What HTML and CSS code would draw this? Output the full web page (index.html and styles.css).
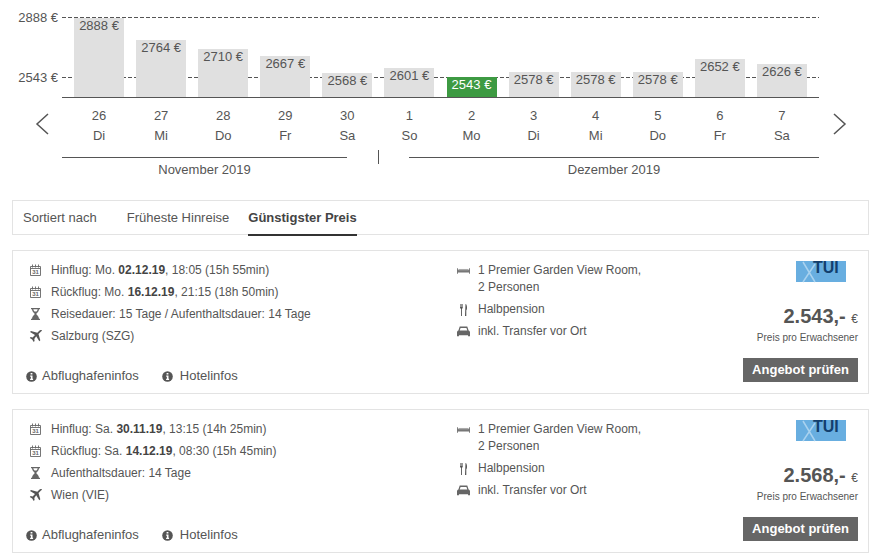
FILE: index.html

```html
<!DOCTYPE html>
<html lang="de">
  <head>
    <meta charset="UTF-8" />
    <title>Angebote</title>
    <link rel="stylesheet" href="styles.css">
  </head>
  <body>
    <svg class="sprite" width="0" height="0">
      <symbol id="i-cal" viewBox="0 0 11 12">
        <path d="M.5 2.500h10v9H.5zM.5 4.500h10M2.500 .5v3M5.500 .5v3M8.500 .5v3" fill="none" stroke="#666" stroke-width=".9" />
      </symbol>
      <symbol id="i-glass" viewBox="0 0 9 12">
        <path d="M0 0h9v1.300H8C8 4 5.600 5 5.200 6c.4 1 2.800 2 2.800 4.700h1V12H0v-1.300h1C1 8 3.400 7 3.800 6 3.400 5 1 4 1 1.300H0zM2.300 1.300c.1 1 .6 1.700 1.200 2.300h2c.6-.6 1.100-1.300 1.200-2.300z" fill="#666" fill-rule="evenodd" />
      </symbol>
      <symbol id="i-plane" viewBox="0 0 13 12">
        <path d="M12.800.2c-.7-.5-1.800-.1-2.500.6L8.300 2.800 2 1 1 2l5 3.100-2.400 2.300-1.900-.3-.9.9 2.400 1.500 1.500 2.400.9-.9-.3-1.900L7.200 6.200 10.300 11.300l1-1-1.800-6.300 2-2c.7-.7 1.900-1.200 1.300-1.800z" fill="#555" />
      </symbol>
      <symbol id="i-info" viewBox="0 0 11 11">
        <circle cx="5.500" cy="5.500" r="5.300" fill="#555" />
        <path d="M4.600 2h1.800v1.600H4.600zM4.200 4.500h2.300v3.300h.6V9H4.100V7.800h.8V5.700h-.7z" fill="#fff" />
      </symbol>
      <symbol id="i-bed" viewBox="0 0 14 6">
        <path d="M0 0h1v2h12V0h1v6h-1V4.500H1V6H0z" fill="#777" />
        <path d="M1.500 .8h11v1.500h-11z" fill="#aaa" />
      </symbol>
      <symbol id="i-food" viewBox="0 0 7 12">
        <path d="M0 0h.6v3h.5V0h.6v3h.5V0h.6v3.600c0 .7-.4 1.100-.9 1.300V12H1V4.900C.4 4.700 0 4.300 0 3.600zM5.500 0C6.500 0 7 2 7 3.800 7 5.200 6.600 6 6.300 6.300V12H5z" fill="#555" />
      </symbol>
      <symbol id="i-car" viewBox="0 0 12 10">
        <path d="M2.500 0h7l1.200 3.500c.8.300 1.300 1 1.300 1.800V9h-1.800V8H1.800v1H0V5.300c0-.8.5-1.500 1.300-1.800zm.8 1.200L2.500 3.500h7l-.8-2.300z" fill="#666" fill-rule="evenodd" />
      </symbol>
    </svg>

    <section class="calendar">
      <div class="plot">
        <span class="axis axis-max">2888 €</span>
        <span class="axis axis-min">2543 €</span>
        <div class="grid-line grid-max"></div>
        <div class="grid-line grid-min"></div>
        <div class="bars">
          <div class="bar-cell"><div class="bar" style="height: 79px">2888 €</div></div>
          <div class="bar-cell"><div class="bar" style="height: 57px">2764 €</div></div>
          <div class="bar-cell"><div class="bar" style="height: 48px">2710 €</div></div>
          <div class="bar-cell"><div class="bar" style="height: 41px">2667 €</div></div>
          <div class="bar-cell"><div class="bar" style="height: 24px">2568 €</div></div>
          <div class="bar-cell"><div class="bar" style="height: 29px">2601 €</div></div>
          <div class="bar-cell"><div class="bar bar-best" style="height: 20px">2543 €</div></div>
          <div class="bar-cell"><div class="bar" style="height: 25px">2578 €</div></div>
          <div class="bar-cell"><div class="bar" style="height: 25px">2578 €</div></div>
          <div class="bar-cell"><div class="bar" style="height: 25px">2578 €</div></div>
          <div class="bar-cell"><div class="bar" style="height: 38px">2652 €</div></div>
          <div class="bar-cell"><div class="bar" style="height: 33px">2626 €</div></div>
        </div>
      </div>
      <div class="days-row">
        <svg class="arrow" width="14" height="22" viewBox="0 0 14 22"><path d="M13 1L2 11l11 10" /></svg>
        <div class="days">
          <div class="day">26<br>Di</div>
          <div class="day">27<br>Mi</div>
          <div class="day">28<br>Do</div>
          <div class="day">29<br>Fr</div>
          <div class="day">30<br>Sa</div>
          <div class="day">1<br>So</div>
          <div class="day">2<br>Mo</div>
          <div class="day">3<br>Di</div>
          <div class="day">4<br>Mi</div>
          <div class="day">5<br>Do</div>
          <div class="day">6<br>Fr</div>
          <div class="day">7<br>Sa</div>
        </div>
        <svg class="arrow" width="14" height="22" viewBox="0 0 14 22"><path d="M1 1l11 10L1 21" /></svg>
      </div>
      <div class="months">
        <div class="month month-nov">November 2019</div>
        <div class="month-tick"></div>
        <div class="month month-dec">Dezember 2019</div>
      </div>
    </section>

    <nav class="sortbar">
      <span class="sort-label">Sortiert nach</span>
      <a class="sort-item">Früheste Hinreise</a>
      <a class="sort-item active">Günstigster Preis</a>
    </nav>

    <article class="offer">
      <div class="offer-left">
        <div class="info-row"><svg class="icon" viewBox="0 0 11 12"><use href="#i-cal" /><text x="5.500" y="10.300" class="cal-text">31</text></svg>Hinflug: Mo.&nbsp;<b>02.12.19</b>, 18:05 (15h 55min)</div>
        <div class="info-row"><svg class="icon" viewBox="0 0 11 12"><use href="#i-cal" /><text x="5.500" y="10.300" class="cal-text">31</text></svg>Rückflug: Mo.&nbsp;<b>16.12.19</b>, 21:15 (18h 50min)</div>
        <div class="info-row"><svg class="icon"><use href="#i-glass" /></svg>Reisedauer: 15 Tage / Aufenthaltsdauer: 14 Tage</div>
        <div class="info-row"><svg class="icon"><use href="#i-plane" /></svg>Salzburg (SZG)</div>
        <div class="links">
          <a class="link"><svg class="info-icon"><use href="#i-info" /></svg>Abflughafeninfos</a>
          <a class="link"><svg class="info-icon"><use href="#i-info" /></svg>Hotelinfos</a>
        </div>
      </div>
      <div class="offer-mid">
        <div class="hotel-row"><svg class="icon-mid"><use href="#i-bed" /></svg><span>1 Premier Garden View Room,<br>2 Personen</span></div>
        <div class="hotel-row"><svg class="icon-mid"><use href="#i-food" /></svg><span>Halbpension</span></div>
        <div class="hotel-row"><svg class="icon-mid"><use href="#i-car" /></svg><span>inkl. Transfer vor Ort</span></div>
      </div>
      <div class="offer-right">
        <svg class="logo" width="50" height="21" viewBox="0 0 50 21">
          <rect width="50" height="21" fill="#68aee0" />
          <path d="M7 1l12 20M19 3L7 21" stroke="#a9d2ef" stroke-width="1.500" fill="none" />
          <text x="17" y="12" class="logo-text">TUI</text>
        </svg>
        <div class="price">2.543,- <small>€</small></div>
        <div class="price-note">Preis pro Erwachsener</div>
        <a class="btn">Angebot prüfen</a>
      </div>
    </article>

    <article class="offer">
      <div class="offer-left">
        <div class="info-row"><svg class="icon" viewBox="0 0 11 12"><use href="#i-cal" /><text x="5.500" y="10.300" class="cal-text">31</text></svg>Hinflug: Sa.&nbsp;<b>30.11.19</b>, 13:15 (14h 25min)</div>
        <div class="info-row"><svg class="icon" viewBox="0 0 11 12"><use href="#i-cal" /><text x="5.500" y="10.300" class="cal-text">31</text></svg>Rückflug: Sa.&nbsp;<b>14.12.19</b>, 08:30 (15h 45min)</div>
        <div class="info-row"><svg class="icon"><use href="#i-glass" /></svg>Aufenthaltsdauer: 14 Tage</div>
        <div class="info-row"><svg class="icon"><use href="#i-plane" /></svg>Wien (VIE)</div>
        <div class="links">
          <a class="link"><svg class="info-icon"><use href="#i-info" /></svg>Abflughafeninfos</a>
          <a class="link"><svg class="info-icon"><use href="#i-info" /></svg>Hotelinfos</a>
        </div>
      </div>
      <div class="offer-mid">
        <div class="hotel-row"><svg class="icon-mid"><use href="#i-bed" /></svg><span>1 Premier Garden View Room,<br>2 Personen</span></div>
        <div class="hotel-row"><svg class="icon-mid"><use href="#i-food" /></svg><span>Halbpension</span></div>
        <div class="hotel-row"><svg class="icon-mid"><use href="#i-car" /></svg><span>inkl. Transfer vor Ort</span></div>
      </div>
      <div class="offer-right">
        <svg class="logo" width="50" height="21" viewBox="0 0 50 21">
          <rect width="50" height="21" fill="#68aee0" />
          <path d="M7 1l12 20M19 3L7 21" stroke="#a9d2ef" stroke-width="1.500" fill="none" />
          <text x="17" y="12" class="logo-text">TUI</text>
        </svg>
        <div class="price">2.568,- <small>€</small></div>
        <div class="price-note">Preis pro Erwachsener</div>
        <a class="btn">Angebot prüfen</a>
      </div>
    </article>
  </body>
</html>
```

FILE: styles.css

```css
body {
  margin: 0;
  padding: 0;
  font-family: "Liberation Sans", Arial, sans-serif;
  font-size: 12px;
  color: #555;
  background: #fff;
}
.sprite {
  position: absolute;
}

/* price calendar */
.calendar {
  height: 200px;
  padding-top: 18px;
  box-sizing: border-box;
  font-size: 13px;
}
.plot {
  position: relative;
  height: 80px;
  width: 757px;
  margin-left: 62px;
  border-bottom: 1px solid #555;
  box-sizing: border-box;
}
.axis {
  position: absolute;
  right: 100%;
  margin-right: 4px;
  line-height: 14px;
  white-space: nowrap;
}
.axis-max {
  top: -7px;
}
.axis-min {
  top: 53px;
}
.grid-line {
  position: absolute;
  left: 0;
  right: 0;
  height: 1px;
  background: repeating-linear-gradient(to right, #555 0, #555 4px, transparent 4px, transparent 6px);
}
.grid-max {
  top: -1px;
}
.grid-min {
  top: 59px;
}
.bars {
  position: relative;
  display: flex;
  height: 79px;
  padding: 0 6px;
  align-items: flex-end;
}
.bar-cell {
  width: 62.1px;
  display: flex;
  justify-content: center;
}
.bar {
  width: 50px;
  padding-top: 1px;
  box-sizing: border-box;
  background: #e0e0e0;
  text-align: center;
  line-height: 14px;
  color: #555;
}
.bar-best {
  background: #3d9a42;
  color: #fff;
}
.days-row {
  display: flex;
  align-items: center;
  margin-top: 8px;
}
.arrow {
  flex: none;
  margin: 0 13px 4px 35px;
}
.arrow path {
  fill: none;
  stroke: #555;
  stroke-width: 1.5;
}
.days {
  display: flex;
  width: 757px;
  padding: 0 6px;
  box-sizing: border-box;
}
.days + .arrow {
  margin: 0 33px 4px 14px;
}
.day {
  width: 62.1px;
  text-align: center;
  line-height: 20px;
}
.months {
  display: flex;
  width: 757px;
  margin: 11px 0 0 62px;
}
.month {
  border-top: 1px solid #555;
  text-align: center;
  padding-top: 5px;
  line-height: 14px;
}
.month-nov {
  width: 285px;
}
.month-dec {
  width: 410px;
}
.month-tick {
  width: 1px;
  height: 14px;
  margin: 0 30px 0 31px;
  background: #555;
  transform: translateY(-7px);
}

/* sort bar */
.sortbar {
  display: flex;
  height: 33px;
  margin: 0 9px 15px 12px;
  padding-left: 10px;
  align-items: stretch;
  border: 1px solid #e3e3e3;
  font-size: 13px;
  line-height: 33px;
}
.sort-label {
  margin-right: 30px;
}
.sort-item {
  margin-right: 19px;
  position: relative;
}
.sort-item.active {
  font-weight: bold;
  color: #444;
}
.sort-item.active::after {
  content: "";
  position: absolute;
  left: 0;
  right: 0;
  bottom: -2px;
  height: 2px;
  background: #333;
}

/* offers */
.offer {
  display: flex;
  height: 144px;
  margin: 0 9px 15px 12px;
  padding: 0 10px 0 13px;
  box-sizing: border-box;
  border: 1px solid #e3e3e3;
}
.offer-left {
  width: 431px;
  flex: none;
  padding-top: 8px;
}
.info-row {
  display: flex;
  align-items: center;
  height: 22px;
  padding-left: 3px;
  white-space: pre;
}
.info-row b {
  color: #444;
}
.icon {
  width: 13px;
  height: 12px;
  margin-right: 9px;
  flex: none;
}
.cal-text {
  font-size: 6px;
  font-weight: bold;
  text-anchor: middle;
  fill: #666;
}
.links {
  display: flex;
  margin-top: 18px;
  font-size: 13px;
  line-height: 22px;
}
.link {
  display: flex;
  align-items: center;
  margin-right: 23px;
}
.info-icon {
  width: 11px;
  height: 11px;
  margin-right: 5px;
}
.link + .link .info-icon {
  margin-right: 7px;
}
.offer-mid {
  flex: 1;
  padding-top: 11px;
}
.hotel-row {
  display: flex;
  line-height: 17px;
  margin-bottom: 5px;
}
.icon-mid {
  width: 13px;
  height: 12px;
  margin: 3px 8px 0 0;
  flex: none;
}
.offer-right {
  display: flex;
  flex-direction: column;
  align-items: flex-end;
  padding-top: 10px;
}
.logo {
  margin-right: 12px;
  flex: none;
  overflow: visible;
}
.logo-text {
  font-size: 16px;
  font-weight: bold;
  fill: #123f6d;
}
.price {
  margin-top: 22px;
  font-size: 20px;
  font-weight: bold;
  line-height: 24px;
  white-space: nowrap;
}
.price small {
  font-size: 12px;
  font-weight: normal;
  line-height: 1;
}
.price-note {
  margin-top: 4px;
  font-size: 10px;
  line-height: 12px;
}
.btn {
  display: block;
  margin-top: 14px;
  width: 115px;
  height: 24px;
  background: #666;
  color: #fff;
  font-size: 13px;
  font-weight: bold;
  text-align: center;
  line-height: 23px;
}
```
